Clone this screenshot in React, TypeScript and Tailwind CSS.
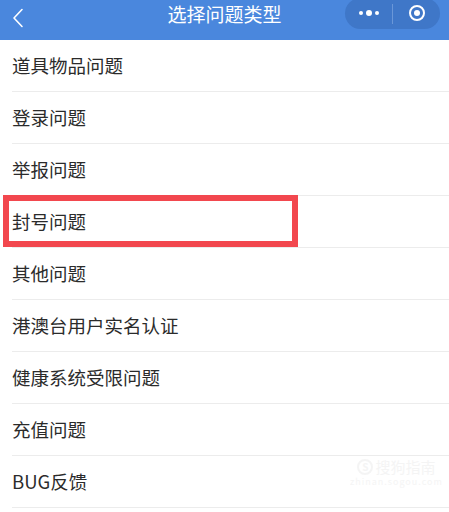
const items = [
  "道具物品问题",
  "登录问题",
  "举报问题",
  "封号问题",
  "其他问题",
  "港澳台用户实名认证",
  "健康系统受限问题",
  "充值问题",
  "BUG反馈",
];

export default function App() {
  return (
    <div
      className="relative w-[449px] h-[512px] overflow-hidden bg-white"
      style={{ fontFamily: '"Noto Sans CJK SC", "Noto Sans", sans-serif' }}
    >
      {/* Title bar */}
      <div className="relative h-[40px] bg-[#4a87dd] flex items-center">
        <svg className="ml-[12px] -mt-[5px]" width="12" height="20" viewBox="0 0 12 20" fill="none">
          <path d="M10 1.5 L2 10 L10 18.5" stroke="white" strokeWidth="1.6" strokeLinecap="round" strokeLinejoin="round" />
        </svg>
        <div className="absolute left-0 right-0 top-[1px] text-center text-white text-[19px] leading-[26px] pointer-events-none">
          选择问题类型
        </div>
        <div className="absolute right-[9px] top-[-2px] w-[95px] h-[31px] rounded-full bg-[#3f77c8] flex items-center">
          <div className="flex-1 flex items-center justify-center gap-[3px] -mt-[1px]">
            <span className="w-[4px] h-[4px] rounded-full bg-white" />
            <span className="w-[6px] h-[6px] rounded-full bg-white" />
            <span className="w-[4px] h-[4px] rounded-full bg-white" />
          </div>
          <div className="w-px h-[20px] bg-[#6a97d8]" />
          <div className="flex-1 flex items-center justify-center -mt-[2px]">
            <span className="w-[16px] h-[16px] rounded-full border-[2px] border-white flex items-center justify-center">
              <span className="w-[6px] h-[6px] rounded-full bg-white" />
            </span>
          </div>
        </div>
      </div>

      {/* List */}
      <div className="flex flex-col">
        {items.map((item) => (
          <div key={item} className="pl-[12px]">
            <div className="h-[52px] flex items-center border-b border-[#ececec] text-[18.5px] text-[#2b2b2b]">
              {item}
            </div>
          </div>
        ))}
      </div>

      {/* Highlight box */}
      <div className="absolute left-[3px] top-[195px] w-[295px] h-[52px] border-[6px] border-[#f2474e]" />

      {/* Watermark */}
      <div className="absolute left-[350px] top-[458px] flex flex-col items-center opacity-40">
        <div className="flex items-center gap-[2px] text-[#e6e6e6] text-[15px] leading-[18px]">
          <span className="w-[16px] h-[16px] rounded-full border-[2px] border-[#e6e6e6] text-[10px] leading-[12px] flex items-center justify-center font-bold">
            S
          </span>
          搜狗指南
        </div>
        <div className="text-[#e6e6e6] text-[9px] leading-[12px] tracking-[1px]">zhinan.sogou.com</div>
      </div>
    </div>
  );
}
